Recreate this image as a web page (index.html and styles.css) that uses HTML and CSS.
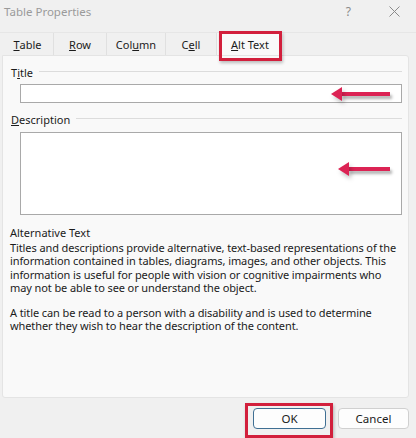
FILE: index.html
```html
<!DOCTYPE html>
<html lang="en">
<head>
    <meta charset="UTF-8">
    <meta name="viewport" content="width=device-width, initial-scale=1.0">
    <title>Table Properties</title>
    <link rel="stylesheet" href="styles.css">
</head>
<body>
    <div class="dialog">
        <div class="titlebar">
            <span class="titlebar__text">Table Properties</span>
            <div class="titlebar__buttons">
                <span class="titlebar__help">?</span>
                <svg class="titlebar__close" width="11" height="11" viewBox="0 0 11 11">
                    <path d="M0.5 0.5 L10.5 10.5 M10.5 0.5 L0.5 10.5" stroke="#8a8a8a" stroke-width="1"/>
                </svg>
            </div>
        </div>

        <div class="tabs">
            <div class="tab"><u>T</u>able</div>
            <div class="tab"><u>R</u>ow</div>
            <div class="tab">Col<u>u</u>mn</div>
            <div class="tab">C<u>e</u>ll</div>
            <div class="tab tab--active tab--marked"><u>A</u>lt Text</div>
        </div>

        <div class="panel">
            <div class="group">
                <span class="group__label">T<u>i</u>tle</span>
                <span class="group__line"></span>
            </div>
            <div class="field field--title">
                <span class="arrow arrow--title"></span>
            </div>

            <div class="group">
                <span class="group__label"><u>D</u>escription</span>
                <span class="group__line"></span>
            </div>
            <div class="field field--desc">
                <span class="arrow arrow--desc"></span>
            </div>

            <div class="help">
                <div class="help__title">Alternative Text</div>
                <p class="help__text">Titles and descriptions provide alternative, text-based representations of the information contained in tables, diagrams, images, and other objects. This information is useful for people with vision or cognitive impairments who may not be able to see or understand the object.</p>
                <p class="help__text">A title can be read to a person with a disability and is used to determine whether they wish to hear the description of the content.</p>
            </div>
        </div>

        <div class="footer">
            <button class="btn btn--default btn--marked">OK</button>
            <button class="btn">Cancel</button>
        </div>
    </div>
</body>
</html>
```

FILE: styles.css
```css
*, *::before, *::after {
    margin: 0;
    padding: 0;
    box-sizing: border-box;
}

body {
    width: 416px;
    height: 438px;
    background-color: #f0f0f0;
    font-family: "Noto Sans", "Open Sans", sans-serif;
    font-size: 11px;
    color: #1b1b1b;
    overflow: hidden;
}

.dialog {
    display: flex;
    flex-direction: column;
    height: 100%;
}

.titlebar {
    height: 23px;
    display: flex;
    justify-content: space-between;
    align-items: center;
    padding: 0 16px 1px 4px;
}

.titlebar__text {
    font-size: 11.5px;
    color: #9a9a9a;
}

.titlebar__buttons {
    display: flex;
    align-items: center;
    gap: 38px;
}

.titlebar__help {
    font-size: 12px;
    color: #8a8a8a;
}

.tabs {
    display: flex;
    margin-top: 9px;
    height: 23px;
    padding-left: 2px;
    border-top: 1px solid #e6e6e6;
}

.tab {
    position: relative;
    display: flex;
    align-items: center;
    justify-content: center;
    border-right: 1px solid #e0e0e0;
    font-size: 11px;
    height: 100%;
    white-space: nowrap;
}

.tab:nth-child(1) { width: 52px; }
.tab:nth-child(2) { width: 53px; }
.tab:nth-child(3) { width: 59px; }
.tab:nth-child(4) { width: 51px; }

.tab--active {
    background-color: #f9f9f9;
    border-right: none;
    width: 66px;
}

.tab--marked::after {
    content: '';
    position: absolute;
    left: 2px;
    top: -2px;
    width: 63px;
    height: 30px;
    border: 3px solid #d21f3c;
    box-shadow: 1px 2px 3px rgba(0, 0, 0, 0.25);
}

.panel {
    margin: 0 7px 0 2px;
    height: 343px;
    background-color: #f9f9f9;
    border: 1px solid #e4e4e4;
    border-radius: 0 3px 3px 3px;
    padding: 8px 6px 0 8px;
}

.group {
    display: flex;
    align-items: center;
    height: 16px;
}

.group__label {
    font-size: 11px;
    padding-right: 6px;
}

.group__line {
    flex: 1;
    height: 1px;
    background-color: #dcdcdc;
    margin-top: -2px;
}

.field {
    position: relative;
    margin: 4px 0 0 9px;
    background-color: #fff;
    border: 1px solid #a9a9a9;
}

.field--title {
    height: 19px;
    margin-bottom: 8px;
}

.field--desc {
    height: 83px;
    margin-top: 5px;
}

.arrow {
    position: absolute;
    height: 4px;
    background-color: #dc2354;
    box-shadow: 2px 3px 3px rgba(0, 0, 0, 0.3);
}

.arrow::before {
    content: '';
    position: absolute;
    left: -10px;
    top: -5px;
    border-top: 7px solid transparent;
    border-bottom: 7px solid transparent;
    border-right: 11px solid #dc2354;
    filter: drop-shadow(2px 3px 2px rgba(0, 0, 0, 0.25));
}

.arrow--title {
    left: 320px;
    top: 7px;
    width: 49px;
}

.arrow--desc {
    left: 327px;
    top: 34px;
    width: 42px;
}

.help {
    margin: 10px -1px 0 -1px;
}

.help__title {
    font-size: 11px;
    line-height: 16px;
}

.help__text {
    font-size: 11px;
    line-height: 13.3px;
    letter-spacing: -0.1px;
    margin-bottom: 12px;
}

.footer {
    display: flex;
    justify-content: flex-end;
    gap: 12px;
    padding: 10px 7px 0 0;
}

.btn {
    position: relative;
    height: 21px;
    width: 71px;
    background-color: #fdfdfd;
    border: 1px solid #d0d0d0;
    border-radius: 4px;
    font-family: inherit;
    font-size: 11.5px;
    color: #1b1b1b;
}

.btn--default {
    width: 73px;
    border-color: #3f6f93;
}

.btn--marked::after {
    content: '';
    position: absolute;
    left: -9px;
    top: -6px;
    width: 88px;
    height: 35px;
    border: 3px solid #d21f3c;
    box-shadow: 1px 2px 3px rgba(0, 0, 0, 0.25);
}
```
